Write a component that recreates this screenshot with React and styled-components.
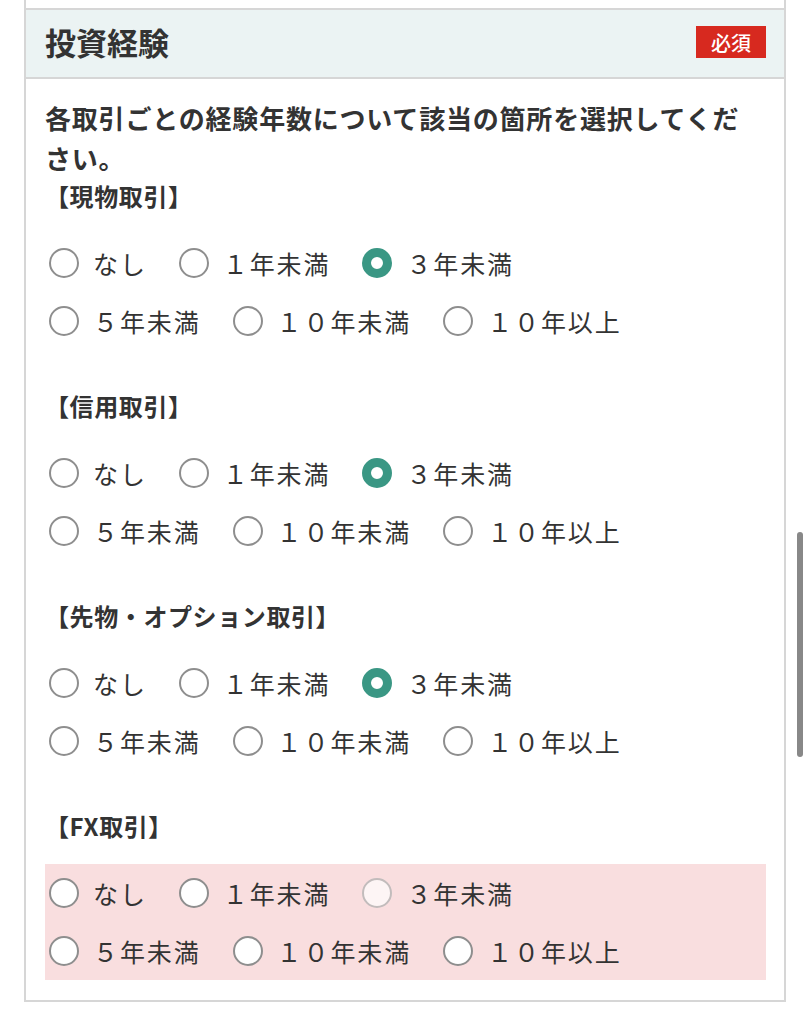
import React from "react";
import styled, { createGlobalStyle } from "styled-components";

const GlobalStyle = createGlobalStyle`
  body {
    margin: 0;
    background: #ffffff;
    font-family: "Noto Sans CJK JP", "Noto Sans", sans-serif;
    color: #333333;
  }
`;

const Page = styled.div`
  position: relative;
  width: 810px;
  height: 1024px;
  overflow: hidden;
`;

const PrevCard = styled.div`
  margin-left: 24px;
  width: 758px;
  height: 8px;
  border: 2px solid #d6d6d6;
  border-top: none;
`;

const Card = styled.section`
  margin-left: 24px;
  width: 758px;
  border: 2px solid #d6d6d6;
  border-top: none;
`;

const Header = styled.div`
  display: flex;
  align-items: center;
  justify-content: space-between;
  height: 67px;
  padding: 0 18px 0 19px;
  background: #ebf3f3;
  border-bottom: 2px solid #d6d6d6;
`;

const Title = styled.h2`
  margin: -4px 0 0;
  font-size: 31px;
  font-weight: 700;
  color: #333;
`;

const Badge = styled.span`
  display: flex;
  align-items: center;
  justify-content: center;
  width: 70px;
  height: 32px;
  background: #d7291f;
  color: #fff;
  font-size: 20px;
  font-weight: 500;
  margin-top: -3px;
`;

const Body = styled.div`
  padding: 19px 18px 20px 19px;
`;

const Lead = styled.p`
  margin: 0;
  max-width: 702px;
  font-size: 26px;
  font-weight: 700;
  line-height: 40px;
  letter-spacing: 0.8px;
  color: #333;
`;

const Group = styled.div`
  margin-bottom: ${(p) => (p.last ? "0" : "38px")};
`;

const GroupTitle = styled.h3`
  margin: 0;
  font-size: 24px;
  font-weight: 700;
  line-height: 36px;
  letter-spacing: 0.6px;
  color: #333;
`;

const Options = styled.div`
  margin-top: 20px;
  padding-left: 4px;
  background: ${(p) => (p.error ? "#f9dedf" : "transparent")};
`;

const Row = styled.div`
  display: flex;
  align-items: center;
  gap: 32px;
  height: 58px;
`;

const Option = styled.label`
  display: flex;
  align-items: center;
  gap: 14px;
  font-size: 25px;
  font-weight: 400;
  letter-spacing: 1.9px;
  color: #333;
  cursor: pointer;
`;

const Radio = styled.span`
  box-sizing: border-box;
  width: 30px;
  height: 30px;
  border-radius: 50%;
  flex-shrink: 0;
  border: ${(p) =>
    p.checked ? "9.5px solid #3a9784" : p.faded ? "2.5px solid #c2bcbc" : "2.5px solid #8e8e8e"};
  background: ${(p) => (p.faded ? "#fdf5f5" : "#fff")};
`;

const Scrollbar = styled.div`
  position: absolute;
  left: 797px;
  top: 532px;
  width: 6px;
  height: 225px;
  border-radius: 3px;
  background: #888;
`;

const choices = ["なし", "１年未満", "３年未満", "５年未満", "１０年未満", "１０年以上"];

const groups = [
  { title: "【現物取引】", selected: 2 },
  { title: "【信用取引】", selected: 2 },
  { title: "【先物・オプション取引】", selected: 2 },
  { title: "【FX取引】", selected: -1, error: true, faded: 2 },
];

function App() {
  return (
    <Page>
      <GlobalStyle />
      <PrevCard />
      <Card>
        <Header>
          <Title>投資経験</Title>
          <Badge>必須</Badge>
        </Header>
        <Body>
          <Lead>各取引ごとの経験年数について該当の箇所を選択してください。</Lead>
          {groups.map((g, gi) => (
            <Group key={g.title} last={gi === groups.length - 1}>
              <GroupTitle>{g.title}</GroupTitle>
              <Options error={g.error}>
                {[0, 3].map((start) => (
                  <Row key={start}>
                    {choices.slice(start, start + 3).map((c, i) => (
                      <Option key={c}>
                        <Radio
                          checked={g.selected === start + i}
                          faded={g.faded === start + i}
                        />
                        {c}
                      </Option>
                    ))}
                  </Row>
                ))}
              </Options>
            </Group>
          ))}
        </Body>
      </Card>
      <Scrollbar />
    </Page>
  );
}

export default App;
